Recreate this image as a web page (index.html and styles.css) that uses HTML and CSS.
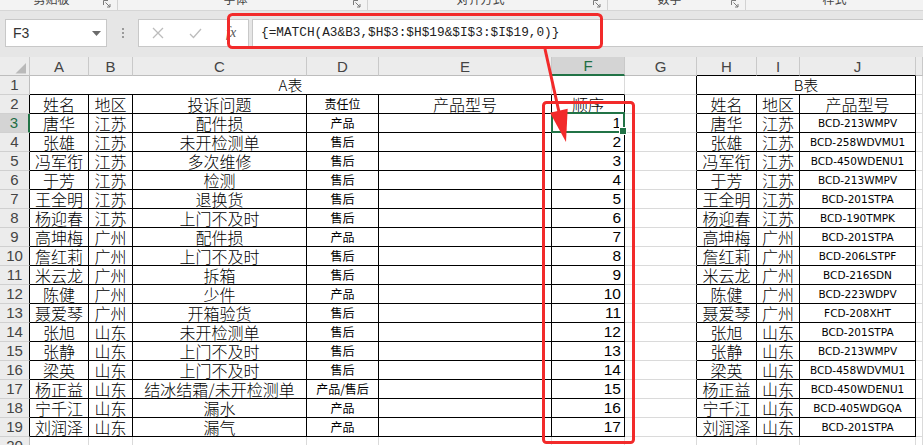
FILE: index.html
```html
<!DOCTYPE html>
<html lang="zh-CN">
<head>
<meta charset="utf-8">
<title>Excel MATCH</title>
<link rel="stylesheet" href="styles.css">
</head>
<body>
<div class="ribbon">
  <div class="grp g1"><span class="glabel">剪贴板</span><svg class="launch" width="8" height="8" viewBox="0 0 8 8"><path d="M0.5 5V0.5H5M2.5 2.5L7 7M7 4V7H4" fill="none" stroke="#7a7a7a" stroke-width="1"/></svg></div>
  <div class="grp g2"><span class="glabel">字体</span><svg class="launch" width="8" height="8" viewBox="0 0 8 8"><path d="M0.5 5V0.5H5M2.5 2.5L7 7M7 4V7H4" fill="none" stroke="#7a7a7a" stroke-width="1"/></svg></div>
  <div class="grp g3"><span class="glabel">对齐方式</span><svg class="launch" width="8" height="8" viewBox="0 0 8 8"><path d="M0.5 5V0.5H5M2.5 2.5L7 7M7 4V7H4" fill="none" stroke="#7a7a7a" stroke-width="1"/></svg></div>
  <div class="grp g4"><span class="glabel">数字</span><svg class="launch" width="8" height="8" viewBox="0 0 8 8"><path d="M0.5 5V0.5H5M2.5 2.5L7 7M7 4V7H4" fill="none" stroke="#7a7a7a" stroke-width="1"/></svg></div>
  <div class="grp g5"><span class="glabel">样式</span></div>
</div>

<div class="fbar">
  <div class="namebox"><span class="nbtext">F3</span><svg class="dd" width="9" height="5" viewBox="0 0 9 5"><path d="M0 0H9L4.5 5Z" fill="#6b6b6b"/></svg></div>
  <div class="grip"><i></i><i></i><i></i></div>
  <div class="fbtns">
    <svg class="ficon" width="12" height="12" viewBox="0 0 12 12"><path d="M1 1L11 11M11 1L1 11" stroke="#bcbcbc" stroke-width="1.3" fill="none"/></svg>
    <svg class="ficon" width="13" height="11" viewBox="0 0 13 11"><path d="M1 6L4.5 9.5L12 1" stroke="#bcbcbc" stroke-width="1.3" fill="none"/></svg>
    <span class="fx">fx</span>
  </div>
  <div class="finput">{=MATCH(A3&amp;B3,$H$3:$H$19&amp;$I$3:$I$19,0)}</div>
</div>

<div class="sheet">
  <div class="row hdr">
    <div class="corner"><svg width="30" height="19" viewBox="0 0 30 19"><path d="M15.5 16.5H26V6Z" fill="#b9b9b9"/></svg></div>
    <div class="ch">A</div><div class="ch">B</div><div class="ch">C</div><div class="ch">D</div><div class="ch">E</div>
    <div class="ch sel">F</div><div class="ch">G</div><div class="ch hb">H</div><div class="ch hb">I</div><div class="ch hb">J</div><div class="ch"></div>
  </div>

  <div class="row">
    <div class="rh">1</div>
    <div class="c m5 topA tt">A表</div>
    <div class="c topA"></div>
    <div class="c bl"></div>
    <div class="c tb m3 tt">B表</div>
    <div class="c"></div>
  </div>

  <div class="row">
    <div class="rh dk">2</div>
    <div class="c ta nm">姓名</div><div class="c ta nm">地区</div><div class="c ta nm">投诉问题</div><div class="c ta sm">责任位</div><div class="c ta nm">产品型号</div><div class="c ta nm">顺序</div>
    <div class="c bl"></div>
    <div class="c tb nm">姓名</div><div class="c tb nm">地区</div><div class="c tb nm">产品型号</div><div class="c"></div>
  </div>

  <div class="row">
    <div class="rh rsel">3</div>
    <div class="c ta nm">唐华</div><div class="c ta nm">江苏</div><div class="c ta nm">配件损</div><div class="c ta sm">产品</div><div class="c ta"></div><div class="c ta num active">1</div>
    <div class="c bl"></div>
    <div class="c tb nm">唐华</div><div class="c tb nm">江苏</div><div class="c tb md">BCD-213WMPV</div><div class="c"></div>
  </div>

  <div class="row">
    <div class="rh dk">4</div>
    <div class="c ta nm">张雄</div><div class="c ta nm">江苏</div><div class="c ta nm">未开检测单</div><div class="c ta sm">售后</div><div class="c ta"></div><div class="c ta num">2</div>
    <div class="c bl"></div>
    <div class="c tb nm">张雄</div><div class="c tb nm">江苏</div><div class="c tb md">BCD-258WDVMU1</div><div class="c"></div>
  </div>

  <div class="row">
    <div class="rh dk">5</div>
    <div class="c ta nm">冯军衔</div><div class="c ta nm">江苏</div><div class="c ta nm">多次维修</div><div class="c ta sm">售后</div><div class="c ta"></div><div class="c ta num">3</div>
    <div class="c bl"></div>
    <div class="c tb nm">冯军衔</div><div class="c tb nm">江苏</div><div class="c tb md">BCD-450WDENU1</div><div class="c"></div>
  </div>

  <div class="row">
    <div class="rh dk">6</div>
    <div class="c ta nm">于芳</div><div class="c ta nm">江苏</div><div class="c ta nm">检测</div><div class="c ta sm">售后</div><div class="c ta"></div><div class="c ta num">4</div>
    <div class="c bl"></div>
    <div class="c tb nm">于芳</div><div class="c tb nm">江苏</div><div class="c tb md">BCD-213WMPV</div><div class="c"></div>
  </div>

  <div class="row">
    <div class="rh dk">7</div>
    <div class="c ta nm">王全明</div><div class="c ta nm">江苏</div><div class="c ta nm">退换货</div><div class="c ta sm">售后</div><div class="c ta"></div><div class="c ta num">5</div>
    <div class="c bl"></div>
    <div class="c tb nm">王全明</div><div class="c tb nm">江苏</div><div class="c tb md">BCD-201STPA</div><div class="c"></div>
  </div>

  <div class="row">
    <div class="rh dk">8</div>
    <div class="c ta nm">杨迎春</div><div class="c ta nm">江苏</div><div class="c ta nm">上门不及时</div><div class="c ta sm">售后</div><div class="c ta"></div><div class="c ta num">6</div>
    <div class="c bl"></div>
    <div class="c tb nm">杨迎春</div><div class="c tb nm">江苏</div><div class="c tb md">BCD-190TMPK</div><div class="c"></div>
  </div>

  <div class="row">
    <div class="rh dk">9</div>
    <div class="c ta nm">高坤梅</div><div class="c ta nm">广州</div><div class="c ta nm">配件损</div><div class="c ta sm">产品</div><div class="c ta"></div><div class="c ta num">7</div>
    <div class="c bl"></div>
    <div class="c tb nm">高坤梅</div><div class="c tb nm">广州</div><div class="c tb md">BCD-201STPA</div><div class="c"></div>
  </div>

  <div class="row">
    <div class="rh dk">10</div>
    <div class="c ta nm">詹红莉</div><div class="c ta nm">广州</div><div class="c ta nm">上门不及时</div><div class="c ta sm">售后</div><div class="c ta"></div><div class="c ta num">8</div>
    <div class="c bl"></div>
    <div class="c tb nm">詹红莉</div><div class="c tb nm">广州</div><div class="c tb md">BCD-206LSTPF</div><div class="c"></div>
  </div>

  <div class="row">
    <div class="rh dk">11</div>
    <div class="c ta nm">米云龙</div><div class="c ta nm">广州</div><div class="c ta nm">拆箱</div><div class="c ta sm">售后</div><div class="c ta"></div><div class="c ta num">9</div>
    <div class="c bl"></div>
    <div class="c tb nm">米云龙</div><div class="c tb nm">广州</div><div class="c tb md">BCD-216SDN</div><div class="c"></div>
  </div>

  <div class="row">
    <div class="rh dk">12</div>
    <div class="c ta nm">陈健</div><div class="c ta nm">广州</div><div class="c ta nm">少件</div><div class="c ta sm">产品</div><div class="c ta"></div><div class="c ta num">10</div>
    <div class="c bl"></div>
    <div class="c tb nm">陈健</div><div class="c tb nm">广州</div><div class="c tb md">BCD-223WDPV</div><div class="c"></div>
  </div>

  <div class="row">
    <div class="rh dk">13</div>
    <div class="c ta nm">聂爱琴</div><div class="c ta nm">广州</div><div class="c ta nm">开箱验货</div><div class="c ta sm">售后</div><div class="c ta"></div><div class="c ta num">11</div>
    <div class="c bl"></div>
    <div class="c tb nm">聂爱琴</div><div class="c tb nm">广州</div><div class="c tb md">FCD-208XHT</div><div class="c"></div>
  </div>

  <div class="row">
    <div class="rh dk">14</div>
    <div class="c ta nm">张旭</div><div class="c ta nm">山东</div><div class="c ta nm">未开检测单</div><div class="c ta sm">售后</div><div class="c ta"></div><div class="c ta num">12</div>
    <div class="c bl"></div>
    <div class="c tb nm">张旭</div><div class="c tb nm">山东</div><div class="c tb md">BCD-201STPA</div><div class="c"></div>
  </div>

  <div class="row">
    <div class="rh dk">15</div>
    <div class="c ta nm">张静</div><div class="c ta nm">山东</div><div class="c ta nm">上门不及时</div><div class="c ta sm">售后</div><div class="c ta"></div><div class="c ta num">13</div>
    <div class="c bl"></div>
    <div class="c tb nm">张静</div><div class="c tb nm">山东</div><div class="c tb md">BCD-213WMPV</div><div class="c"></div>
  </div>

  <div class="row">
    <div class="rh dk">16</div>
    <div class="c ta nm">梁英</div><div class="c ta nm">山东</div><div class="c ta nm">上门不及时</div><div class="c ta sm">售后</div><div class="c ta"></div><div class="c ta num">14</div>
    <div class="c bl"></div>
    <div class="c tb nm">梁英</div><div class="c tb nm">山东</div><div class="c tb md">BCD-458WDVMU1</div><div class="c"></div>
  </div>

  <div class="row">
    <div class="rh dk">17</div>
    <div class="c ta nm">杨正益</div><div class="c ta nm">山东</div><div class="c ta nm">结冰结霜/未开检测单</div><div class="c ta sm">产品/售后</div><div class="c ta"></div><div class="c ta num">15</div>
    <div class="c bl"></div>
    <div class="c tb nm">杨正益</div><div class="c tb nm">山东</div><div class="c tb md">BCD-450WDENU1</div><div class="c"></div>
  </div>

  <div class="row">
    <div class="rh dk">18</div>
    <div class="c ta nm">宁千江</div><div class="c ta nm">山东</div><div class="c ta nm">漏水</div><div class="c ta sm">产品</div><div class="c ta"></div><div class="c ta num">16</div>
    <div class="c bl"></div>
    <div class="c tb nm">宁千江</div><div class="c tb nm">山东</div><div class="c tb md">BCD-405WDGQA</div><div class="c"></div>
  </div>

  <div class="row">
    <div class="rh dk">19</div>
    <div class="c ta nm">刘润泽</div><div class="c ta nm">山东</div><div class="c ta nm">漏气</div><div class="c ta sm">产品</div><div class="c ta"></div><div class="c ta num">17</div>
    <div class="c bl"></div>
    <div class="c tb nm">刘润泽</div><div class="c tb nm">山东</div><div class="c tb md">BCD-201STPA</div><div class="c"></div>
  </div>

  <div class="row">
    <div class="rh">20</div>
    <div class="c"></div><div class="c"></div><div class="c"></div><div class="c"></div><div class="c"></div><div class="c"></div>
    <div class="c"></div><div class="c"></div><div class="c"></div><div class="c"></div><div class="c"></div>
  </div>
</div>

<svg class="annot" width="923" height="445" viewBox="0 0 923 445">
  <rect x="228.5" y="14.5" width="373" height="33" rx="4" fill="none" stroke="#f22a2a" stroke-width="3"/>
  <rect x="543.5" y="102.5" width="90" height="340" rx="3" fill="none" stroke="#f22a2a" stroke-width="3"/>
  <line x1="545" y1="49" x2="559" y2="112" stroke="#f22a2a" stroke-width="3"/>
  <polygon points="566,142 550,112.8 567.7,108.8" fill="#f22a2a"/>
</svg>
</body>
</html>
```

FILE: styles.css
```css
* { box-sizing: border-box; }

html, body {
  margin: 0;
  padding: 0;
}

body {
  width: 923px;
  height: 445px;
  overflow: hidden;
  position: relative;
  background: #ffffff;
  font-family: "Liberation Sans", "Noto Sans CJK SC", sans-serif;
  color: #000;
}

/* ---------- ribbon group labels (cut off) ---------- */
.ribbon {
  display: flex;
  height: 11px;
  background: #f3f3f3;
  border-bottom: 1px solid #d6d6d6;
  overflow: hidden;
}
.grp {
  display: flex;
  align-items: flex-start;
  height: 10px;
  border-right: 1px solid #d2d2d2;
}
.g1 { width: 118px; }
.g2 { width: 250px; }
.g3 { width: 240px; }
.g4 { width: 138px; }
.g5 { flex: 1; border-right: none; }
.glabel {
  flex: 1;
  text-align: center;
  font-family: "Noto Sans CJK SC", sans-serif;
  font-size: 12px;
  line-height: 12px;
  margin-top: -7px;
  color: #444;
}
.launch {
  margin: 0 6px 0 0;
  flex: none;
}

/* ---------- formula bar ---------- */
.fbar {
  display: flex;
  align-items: flex-start;
  height: 46px;
  padding: 8px 0 0 5px;
  background: #e6e6e6;
}
.namebox {
  width: 102px;
  height: 28px;
  background: #fff;
  border: 1px solid #c8c8c8;
  display: flex;
  align-items: center;
  padding: 0 5px 0 7px;
}
.nbtext {
  flex: 1;
  font-size: 14px;
  color: #333;
}
.dd { flex: none; }
.grip {
  width: 31px;
  height: 28px;
  display: flex;
  flex-direction: column;
  align-items: center;
  justify-content: center;
  gap: 2px;
}
.grip i {
  display: block;
  width: 2px;
  height: 2px;
  background: #9a9a9a;
}
.fbtns {
  width: 111px;
  height: 28px;
  background: #fff;
  border: 1px solid #c8c8c8;
  display: flex;
  align-items: center;
  padding-left: 13px;
  gap: 25px;
}
.fx {
  font-family: "Liberation Serif", serif;
  font-style: italic;
  font-size: 14px;
  color: #555;
  margin-left: -1px;
}
.finput {
  flex: 1;
  height: 28px;
  margin-left: 3px;
  background: #fff;
  border: 1px solid #c8c8c8;
  border-right: none;
  padding-left: 8px;
  font-family: "Liberation Mono", monospace;
  font-size: 12.75px;
  line-height: 26px;
  color: #222;
  white-space: nowrap;
}

/* ---------- sheet ---------- */
.sheet {
  height: 388px;
  overflow: hidden;
}
.row {
  display: grid;
  grid-template-columns: 30px 59px 44px 174px 72px 173px 73px 72px 60px 43px 116px 1fr;
  height: 19px;
}
.hdr .corner,
.hdr .ch {
  background: #ececec;
  border-right: 1px solid #c9c9c9;
  border-bottom: 1px solid #bdbdbd;
  display: flex;
  align-items: center;
  justify-content: center;
  font-size: 15px;
  color: #444;
  height: 19px;
}
.hdr .corner { display: block; }
.hdr .corner svg { display: block; }
.hdr .ch.sel {
  background: #d4d4d4;
  color: #1f6e43;
  border-bottom: 2px solid #217346;
}
.hdr .ch.hb { border-bottom-color: #000; }

.rh {
  background: #ececec;
  border-right: 1px solid #bdbdbd;
  border-bottom: 1px solid #d0d0d0;
  display: flex;
  align-items: center;
  justify-content: center;
  font-size: 15px;
  line-height: 18px;
  color: #444;
  height: 19px;
}
.rh.dk { border-right-color: #000; }
.rh.rsel {
  background: #d4d4d4;
  color: #1f6e43;
  border-right: 2px solid #217346;
}

.c {
  height: 19px;
  border-right: 1px solid #dadada;
  border-bottom: 1px solid #dadada;
  display: flex;
  align-items: center;
  justify-content: center;
  overflow: hidden;
  white-space: nowrap;
  font-family: "Noto Sans CJK SC", sans-serif;
  font-weight: 300;
  font-size: 16px;
  line-height: 18px;
  color: #000;
}
.m5 { grid-column: span 5; }
.m3 { grid-column: span 3; }
.topA { border-bottom-color: #000; }
.bl { border-right-color: #000; }
.ta, .tb {
  border-right-color: #000;
  border-bottom-color: #000;
}
.tt { font-size: 15px; }
.sm { font-size: 12px; font-weight: 400; }
.md {
  font-family: "DejaVu Sans", sans-serif;
  font-weight: 400;
  font-size: 10.5px;
}
.num {
  justify-content: flex-end;
  padding-right: 3px;
  font-family: "Liberation Sans", sans-serif;
  font-weight: 400;
  font-size: 15.5px;
}
.active {
  position: relative;
  overflow: visible;
}
.active::after {
  content: "";
  position: absolute;
  left: -1px;
  top: -2px;
  right: -1px;
  bottom: -1px;
  border: 2px solid #217346;
}
.active::before {
  content: "";
  position: absolute;
  right: -3px;
  bottom: -3px;
  width: 6px;
  height: 6px;
  background: #217346;
  border: 1px solid #fff;
  z-index: 2;
}

/* ---------- annotations ---------- */
.annot {
  position: absolute;
  left: 0;
  top: 0;
  pointer-events: none;
}
```
